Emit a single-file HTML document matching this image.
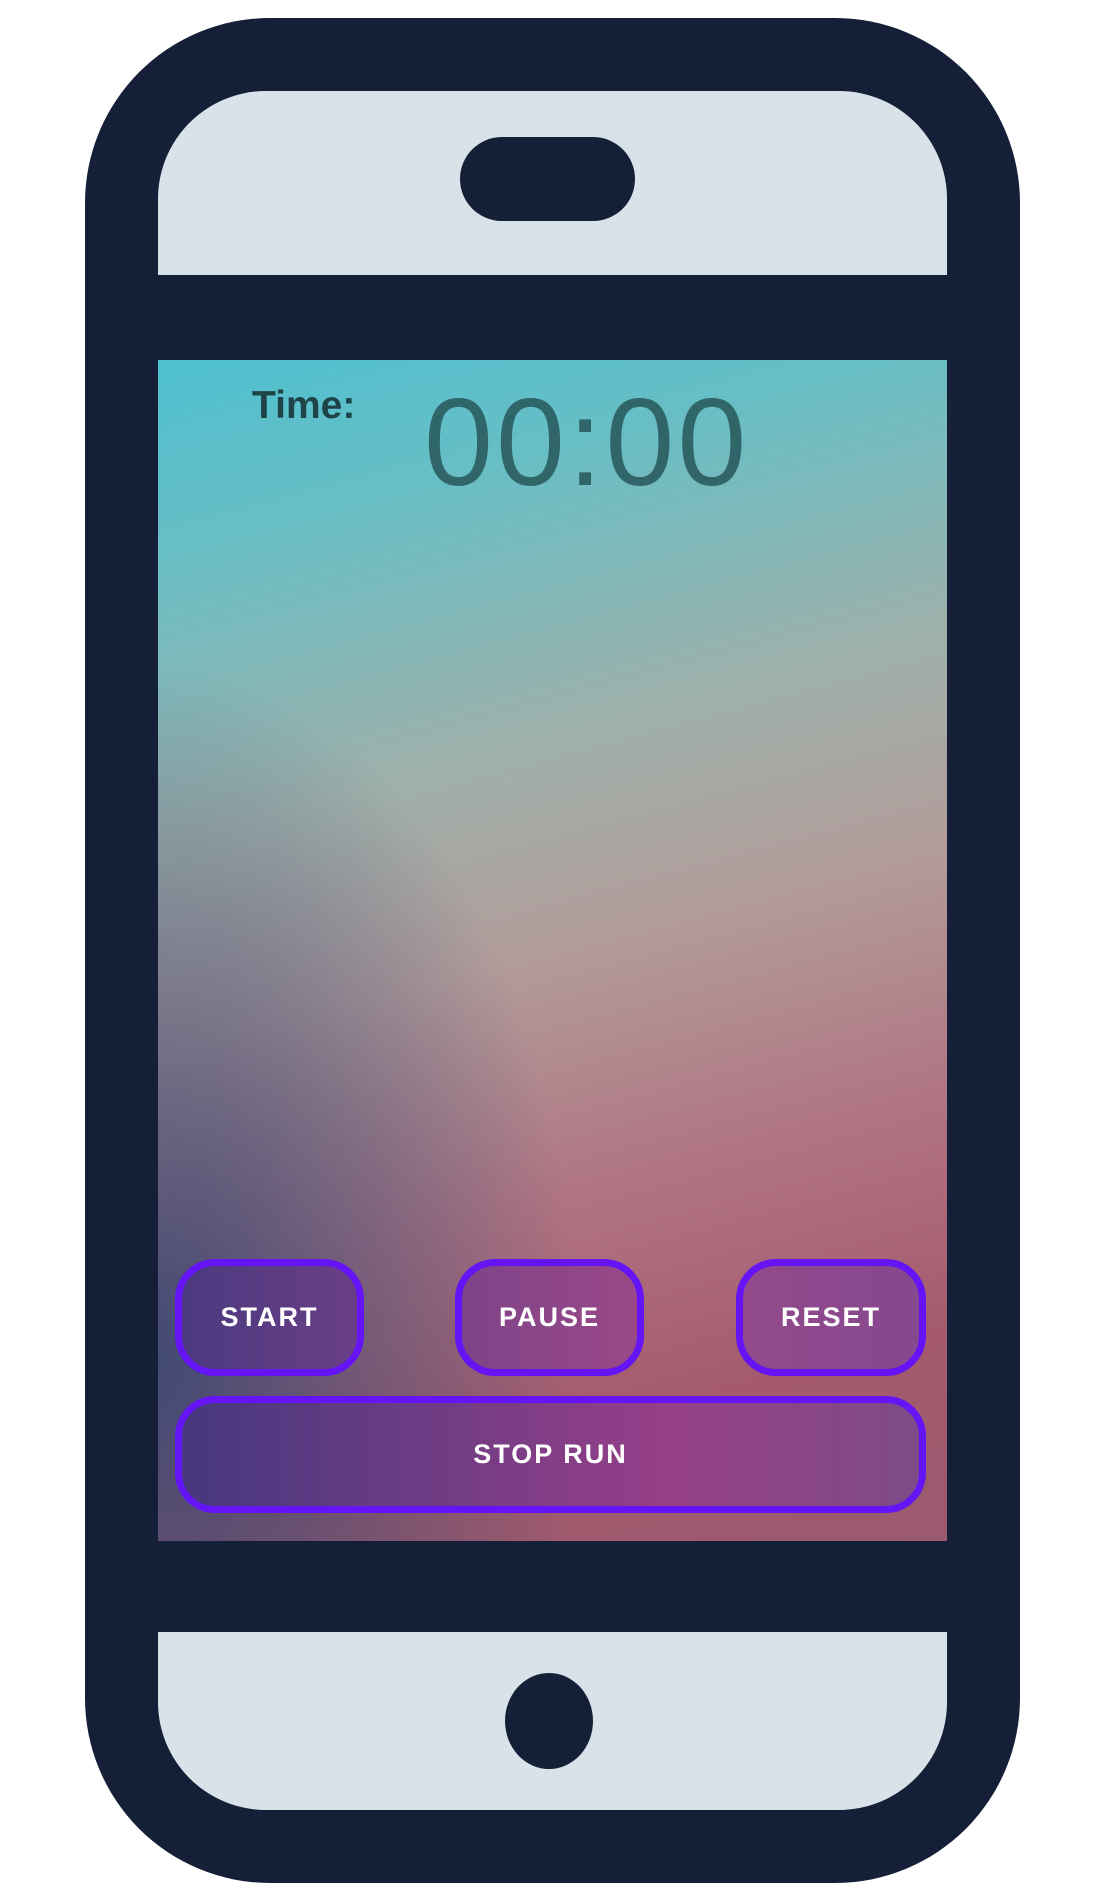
<!DOCTYPE html><html><head><style>
html,body{margin:0;padding:0;background:#fff;width:1100px;height:1900px;overflow:hidden;font-family:"Liberation Sans",sans-serif}
.phone{position:absolute;left:85px;top:18px;width:935px;height:1865px;background:#151f37;border-radius:185px}
.top{position:absolute;left:158px;top:91px;width:789px;height:184px;background:#d8e3e9;border-radius:108px 108px 0 0}
.notch{position:absolute;left:460px;top:137px;width:175px;height:84px;background:#151f37;border-radius:42px}
.bot{position:absolute;left:158px;top:1632px;width:789px;height:178px;background:#d8e3e9;border-radius:0 0 108px 108px}
.home{position:absolute;left:505px;top:1673px;width:88px;height:96px;background:#151f37;border-radius:50%}
.screen{position:absolute;left:158px;top:360px;width:789px;height:1181px;overflow:hidden;
background:
radial-gradient(ellipse 420px 700px at 0% 85%, rgba(60,72,115,.95), rgba(60,72,115,0) 100%),
linear-gradient(165deg,#4ec0d0 0%,#6abec4 15%,#9fb0aa 35%,#b29c9a 50%,#b07482 68%,#a45a6c 85%,#9a5a70 100%)}
.lbl{position:absolute;left:94px;top:24px;font-weight:bold;font-size:39px;color:#1f4448}
.time{position:absolute;left:266px;top:12px;font-size:124px;color:#27575a;opacity:.85;letter-spacing:3px}
.btn{position:absolute;box-sizing:border-box;border:7px solid #6414f5;border-radius:40px;color:#fff;font-weight:bold;font-size:27px;letter-spacing:2px;display:flex;align-items:center;justify-content:center}
</style></head><body>
<div class="phone"></div>
<div class="top"></div><div class="notch"></div>
<div class="bot"></div><div class="home"></div>
<div class="screen">
<div class="lbl">Time:</div>
<div class="time">00:00</div>
<div class="btn" style="left:17px;top:899px;width:189px;height:117px;background:linear-gradient(90deg,#4b3a80,#6a3e86)">START</div>
<div class="btn" style="left:297px;top:899px;width:189px;height:117px;background:linear-gradient(90deg,#7e4488,#9a4888)">PAUSE</div>
<div class="btn" style="left:578px;top:899px;width:190px;height:117px;background:linear-gradient(90deg,#924a8c,#86488e)">RESET</div>
<div class="btn" style="left:17px;top:1036px;width:751px;height:117px;background:linear-gradient(90deg,#46387e,#6a3c84 30%,#953f88 65%,#7e4a88)">STOP RUN</div>
</div>
</body></html>
